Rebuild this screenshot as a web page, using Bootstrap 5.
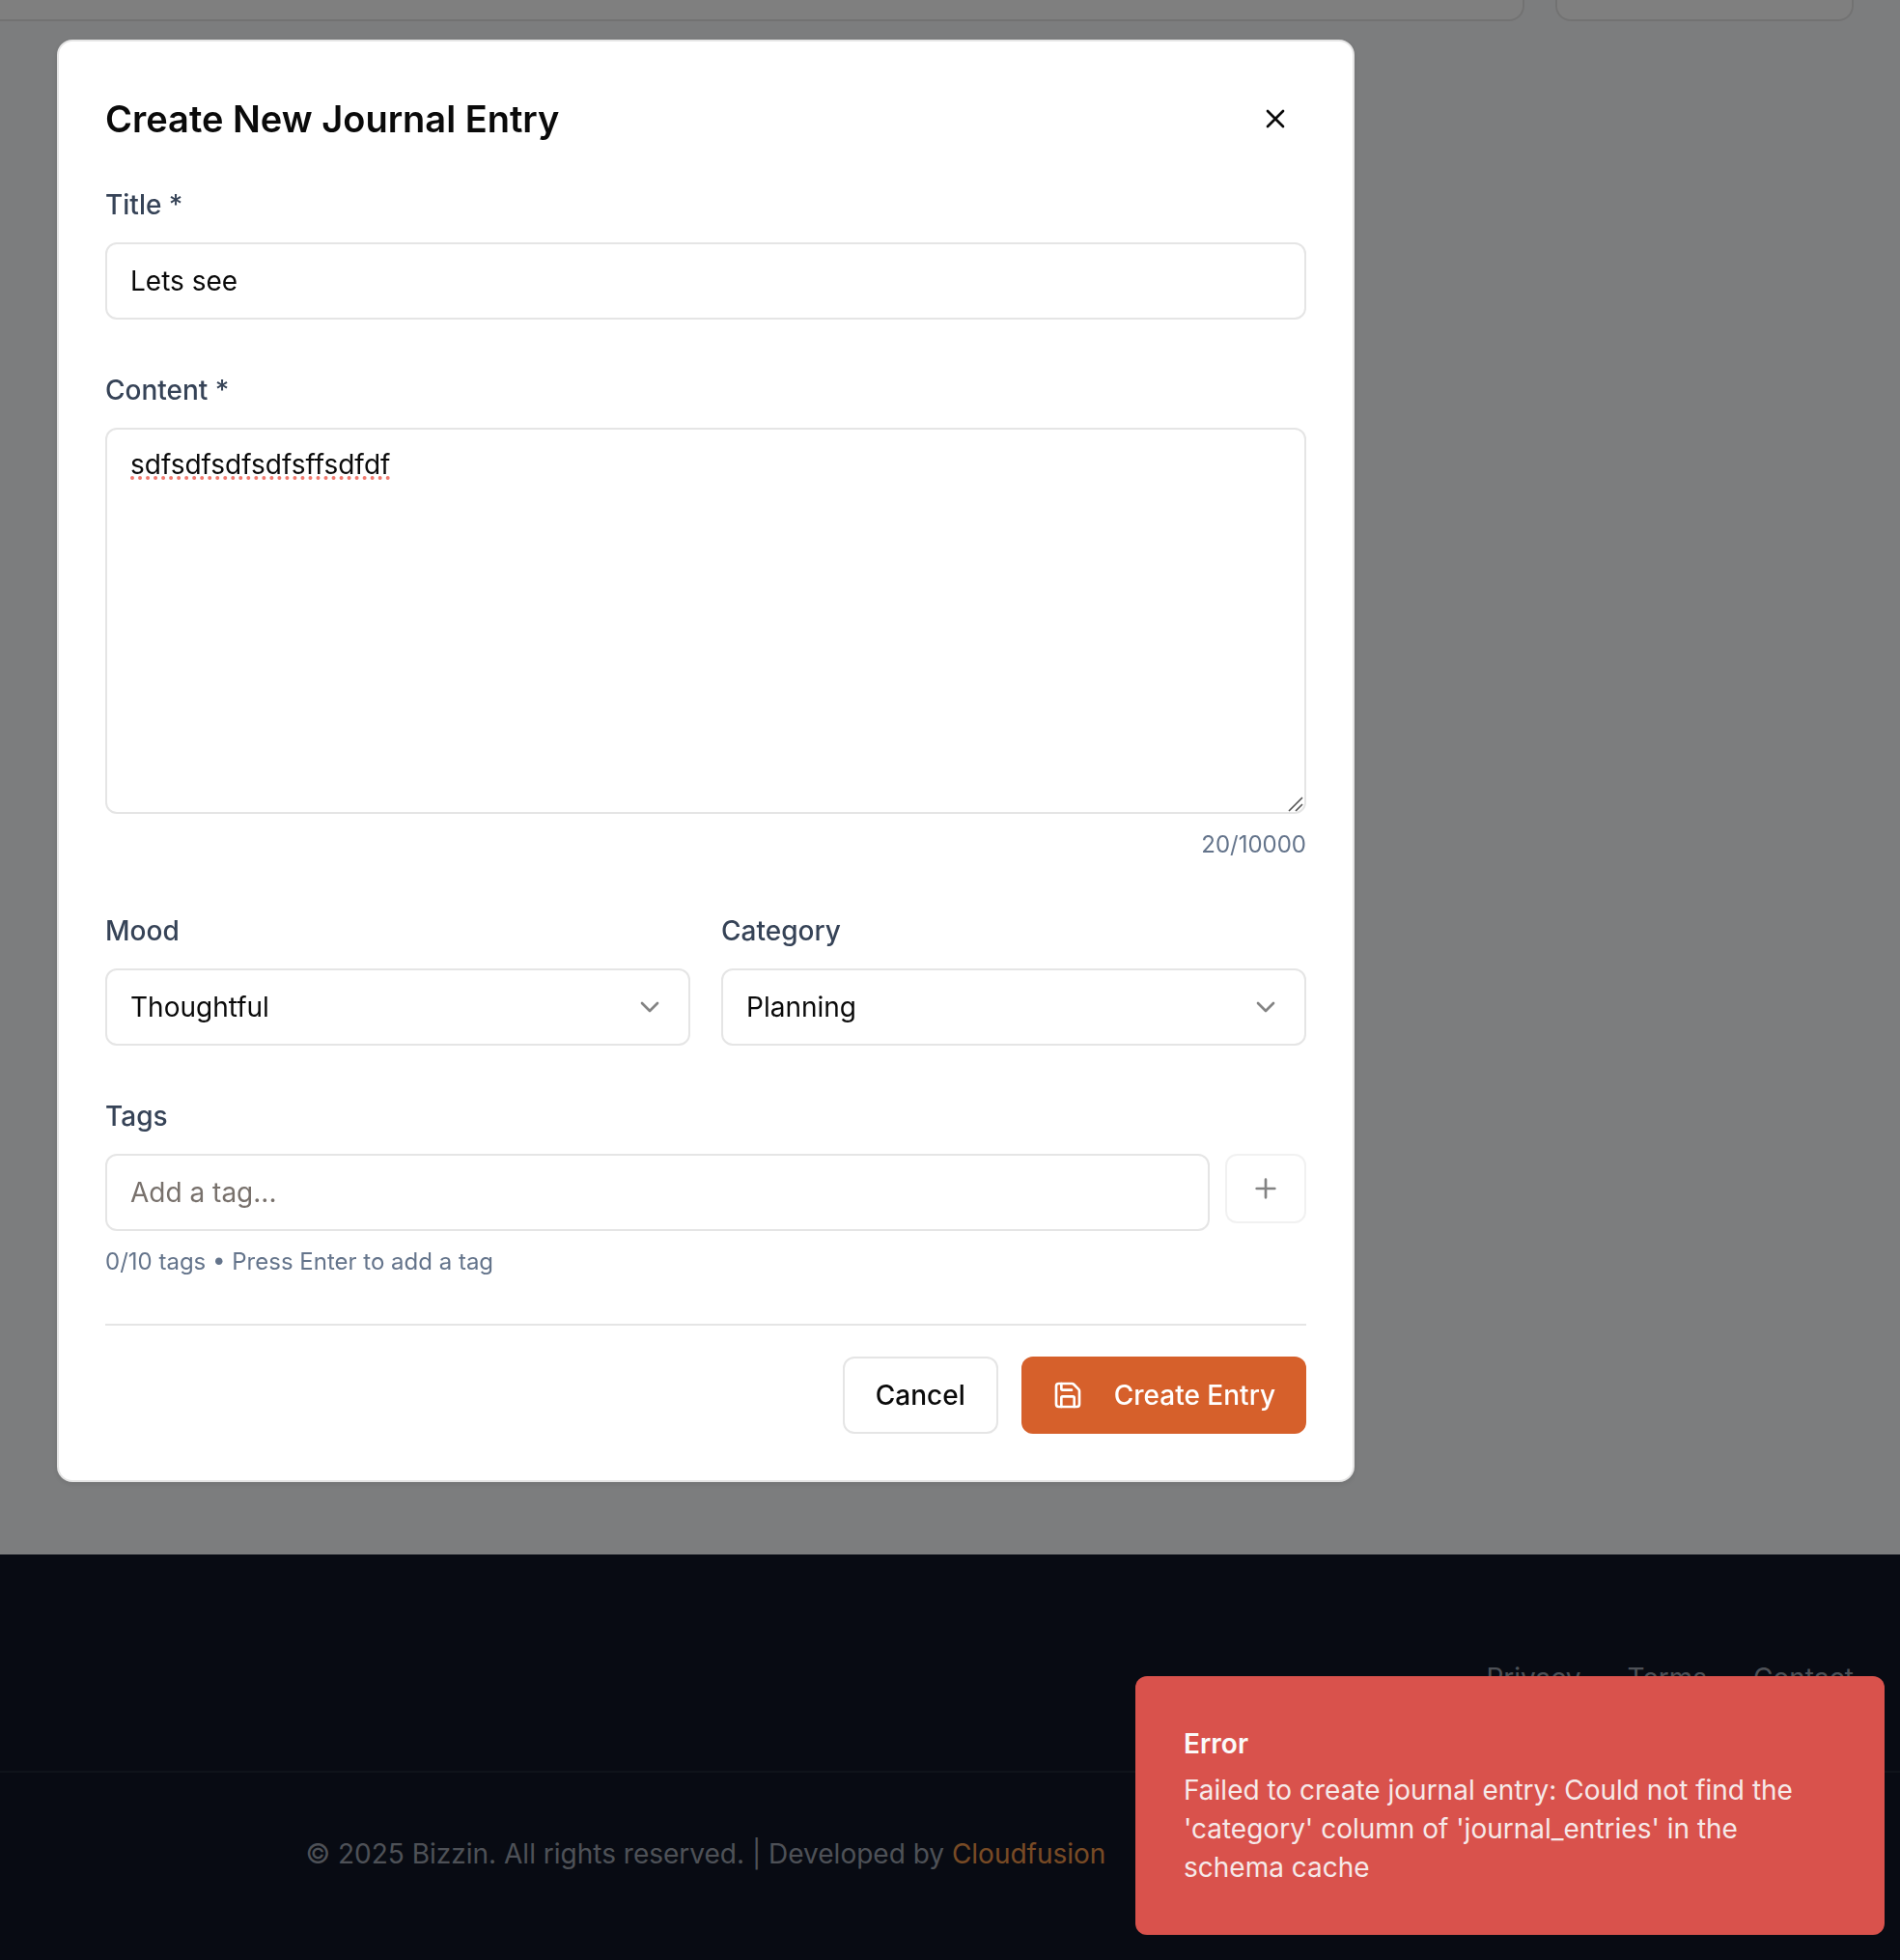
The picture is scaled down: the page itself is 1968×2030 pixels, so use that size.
<!DOCTYPE html>
<html lang="en">
<head>
<meta charset="utf-8">
<meta name="viewport" content="width=device-width, initial-scale=1">
<title>Create New Journal Entry</title>
<link href="https://cdn.jsdelivr.net/npm/bootstrap@5.3.0/dist/css/bootstrap.min.css" rel="stylesheet">
<style>
  :root { --line: #e5e5e5; --ink: #0a0a0a; --label: #364357; --muted: #64748b; }
  body { font-family: Inter, "Liberation Sans", sans-serif; font-size: 28px; line-height: 40px; color: var(--ink); background: #f8fafc; }

  .board { gap: 32px; padding-right: 48px; }
  .panel-end { height: 22px; background: #fff; border: 2px solid var(--line); border-top: 0; border-radius: 0 0 16px 16px; }
  .panel-wide { flex: 1 1 0; border-left: 0; border-bottom-left-radius: 0; }
  .panel-side { flex: 0 0 309px; }

  .site-footer { background: #101626; color: #9ca3af; }
  .footer-links { gap: 48px; padding: 108px 48px 76px; }
  .footer-links a { color: inherit; text-decoration: none; }
  .footer-copy { border-top: 2px solid #1f2635; padding: 64px 506px 90px 0; }
  .footer-copy a { color: #f0964b; text-decoration: none; }

  .veil { background: rgba(0, 0, 0, .5); padding: 41px 59px; z-index: 1050; }
  .entry-dialog { max-width: 1344px; padding: 48px; background: #fff; border: 2px solid var(--line); border-radius: 16px; box-shadow: 0 2px 6px rgba(0, 0, 0, .1); }
  .dialog-head { height: 64px; margin-bottom: 37px; }
  .dialog-title { font-size: 38px; line-height: 56px; font-weight: 600; }
  .btn-close-x { width: 64px; height: 64px; color: var(--ink); }

  .entry-fields { display: flex; flex-direction: column; gap: 53px; }
  .entry-fields label { display: block; margin-bottom: 19px; line-height: 40px; font-weight: 500; color: var(--label); }
  .entry-fields .form-control, .entry-fields .form-select {
    height: 80px; padding: 16px 24px; font-size: 28px; line-height: 40px;
    color: var(--ink); background-color: #fff; border: 2px solid var(--line); border-radius: 12px;
  }
  .entry-fields .form-select {
    background: #fff url("data:image/svg+xml,%3Csvg xmlns='http://www.w3.org/2000/svg' viewBox='0 0 24 24' fill='none' stroke='%23848484' stroke-width='2' stroke-linecap='round' stroke-linejoin='round'%3E%3Cpath d='m6 9 6 6 6-6'/%3E%3C/svg%3E") no-repeat right 24px center / 32px 32px;
  }
  .entry-fields .form-control::placeholder { color: #78716c; opacity: 1; }
  .entry-fields .entry-text {
    display: block; height: 400px; resize: none;
    text-decoration: underline dotted #f0796e 4px; text-underline-offset: 2px; text-decoration-skip-ink: none;
    background: #fff url("data:image/svg+xml,%3Csvg xmlns='http://www.w3.org/2000/svg' viewBox='0 0 16 16' fill='none' stroke='%23505050' stroke-width='1.6'%3E%3Cpath d='M1 15 15 1M8 15l7-7'/%3E%3C/svg%3E") no-repeat right 1px bottom 0 / 16px 16px;
  }
  .hint { margin-top: 16px; font-size: 24px; line-height: 32px; color: var(--muted); }
  .pair { gap: 32px; }
  .tag-row { gap: 16px; }

  .btn-plain, .btn-main { --bs-btn-font-size: 28px; --bs-btn-line-height: 40px; --bs-btn-font-weight: 500; --bs-btn-border-width: 2px; --bs-btn-border-radius: 12px; --bs-btn-padding-y: 18px; --bs-btn-padding-x: 32px; }
  .btn-plain { --bs-btn-color: #0a0a0a; --bs-btn-bg: #fff; --bs-btn-border-color: #e5e5e5; --bs-btn-disabled-color: #0a0a0a; --bs-btn-disabled-bg: #fff; --bs-btn-disabled-border-color: #e5e5e5; --bs-btn-disabled-opacity: .5; }
  .btn-main { --bs-btn-color: #fff; --bs-btn-bg: #d6602b; --bs-btn-border-width: 0; --bs-btn-padding-y: 20px; gap: 32px; }
  .btn-plain.btn-add { width: 84px; height: 72px; padding: 0; }
  .dialog-foot { margin-top: 48px; padding-top: 32px; gap: 24px; border-top: 2px solid var(--line); }
  .dialog-foot .btn-plain { height: 80px; }
  .glyph { width: 32px; height: 32px; fill: none; stroke: currentColor; stroke-width: 2; stroke-linecap: round; stroke-linejoin: round; flex: none; }

  .alert-toast { right: 16px; bottom: 26px; width: 776px; padding: 50px; background: #d9524c; color: #fafafa; border-radius: 12px; z-index: 1090; }
  .alert-toast p { opacity: .9; }
</style>
</head>
<body>
<div class="d-flex flex-column min-vh-100">
  <main class="flex-grow-1">
    <div class="board d-flex">
      <section class="panel-end panel-wide"></section>
      <aside class="panel-end panel-side"></aside>
    </div>
  </main>
  <footer class="site-footer">
    <nav class="footer-links d-flex justify-content-end" aria-label="Footer">
      <a href="#">Privacy</a>
      <a href="#">Terms</a>
      <a href="#">Contact</a>
    </nav>
    <div class="footer-copy text-center">© 2025 Bizzin. All rights reserved. | Developed by <a href="#">Cloudfusion</a></div>
  </footer>
</div>

<div class="veil position-fixed top-0 start-0 w-100 h-100 overflow-auto">
  <div class="entry-dialog" role="dialog" aria-modal="true" aria-labelledby="dialogTitle">
    <div class="dialog-head d-flex align-items-center justify-content-between">
      <h2 class="dialog-title m-0" id="dialogTitle">Create New Journal Entry</h2>
      <button type="button" class="btn-close-x btn border-0 p-0 d-flex align-items-center justify-content-center" aria-label="Close">
        <svg class="glyph" viewBox="0 0 24 24"><path d="M18 6 6 18M6 6l12 12"/></svg>
      </button>
    </div>
    <form>
      <div class="entry-fields">
        <div>
          <label for="title">Title *</label>
          <input class="form-control" id="title" type="text" value="Lets see">
        </div>
        <div>
          <label for="content">Content *</label>
          <textarea class="form-control entry-text" id="content" spellcheck="false">sdfsdfsdfsdfsffsdfdf</textarea>
          <div class="hint text-end">20/10000</div>
        </div>
        <div class="pair d-flex">
          <div class="flex-fill w-50">
            <label for="mood">Mood</label>
            <select class="form-select" id="mood"><option>Thoughtful</option></select>
          </div>
          <div class="flex-fill w-50">
            <label for="category">Category</label>
            <select class="form-select" id="category"><option>Planning</option></select>
          </div>
        </div>
        <div>
          <label for="tags">Tags</label>
          <div class="tag-row d-flex align-items-start">
            <input class="form-control flex-fill" id="tags" type="text" placeholder="Add a tag...">
            <button type="button" class="btn btn-plain btn-add d-flex align-items-center justify-content-center flex-shrink-0" aria-label="Add tag" disabled>
              <svg class="glyph" viewBox="0 0 24 24"><path d="M5 12h14M12 5v14"/></svg>
            </button>
          </div>
          <div class="hint">0/10 tags • Press Enter to add a tag</div>
        </div>
      </div>
      <div class="dialog-foot d-flex justify-content-end">
        <button type="button" class="btn btn-plain">Cancel</button>
        <button type="submit" class="btn btn-main d-flex align-items-center">
          <svg class="glyph" viewBox="0 0 24 24"><path d="M15.2 3a2 2 0 0 1 1.4.6l3.8 3.8a2 2 0 0 1 .6 1.4V19a2 2 0 0 1-2 2H5a2 2 0 0 1-2-2V5a2 2 0 0 1 2-2z"/><path d="M17 21v-7a1 1 0 0 0-1-1H8a1 1 0 0 0-1 1v7"/><path d="M7 3v4a1 1 0 0 0 1 1h7"/></svg>
          <span>Create Entry</span>
        </button>
      </div>
    </form>
  </div>
</div>

<div class="alert-toast position-fixed" role="alert">
  <div class="fw-semibold mb-2">Error</div>
  <p class="m-0">Failed to create journal entry: Could not find the 'category' column of 'journal_entries' in the schema cache</p>
</div>
<script src="https://cdn.jsdelivr.net/npm/bootstrap@5.3.0/dist/js/bootstrap.bundle.min.js"></script>
</body>
</html>
